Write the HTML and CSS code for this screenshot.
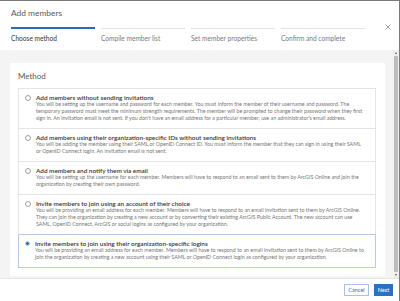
FILE: index.html
```html
<!DOCTYPE html>
<html lang="en">
<head>
  <meta charset="UTF-8" />
  <meta name="viewport" content="width=device-width, initial-scale=1" />
  <title>Add members</title>
  <link rel="stylesheet" href="styles.css">
</head>
<body>
  <div class="dialog">
    <div class="header">
      <div class="dialog-title">Add members</div>
      <div class="steps-row">
        <div class="steps">
          <div class="step active">Choose method</div>
          <div class="step">Compile member list</div>
          <div class="step">Set member properties</div>
          <div class="step">Confirm and complete</div>
        </div>
        <span class="close-x" title="Close" aria-label="Close">
          <svg width="6" height="6" viewBox="0 0 6 6"><path d="M0.5 0.5 L5.5 5.5 M5.5 0.5 L0.5 5.5" stroke="#8a8a8a" stroke-width="0.8" fill="none"/></svg>
        </span>
      </div>
    </div>
    <div class="content">
      <div class="scroll-area">
        <div class="card">
          <div class="card-title">Method</div>
          <div class="options">
            <label class="option">
              <span class="radio"></span>
              <span class="option-body">
                <span class="option-title">Add members without sending invitations</span>
                <span class="option-desc">You will be setting up the username and password for each member. You must inform the member of their username and password. The temporary password must meet the minimum strength requirements. The member will be prompted to change their password when they first sign in. An invitation email is not sent. If you don't have an email address for a particular member, use an administrator's email address.</span>
              </span>
            </label>
            <label class="option">
              <span class="radio"></span>
              <span class="option-body">
                <span class="option-title">Add members using their organization-specific IDs without sending invitations</span>
                <span class="option-desc">You will be adding the member using their SAML or OpenID Connect ID. You must inform the member that they can sign in using their SAML or OpenID Connect login. An invitation email is not sent.</span>
              </span>
            </label>
            <label class="option">
              <span class="radio"></span>
              <span class="option-body">
                <span class="option-title">Add members and notify them via email</span>
                <span class="option-desc">You will be setting up the username for each member. Members will have to respond to an email sent to them by ArcGIS Online and join the organization by creating their own password.</span>
              </span>
            </label>
            <label class="option">
              <span class="radio"></span>
              <span class="option-body">
                <span class="option-title">Invite members to join using an account of their choice</span>
                <span class="option-desc">You will be providing an email address for each member. Members will have to respond to an email invitation sent to them by ArcGIS Online. They can join the organization by creating a new account or by converting their existing ArcGIS Public Account. The new account can use SAML, OpenID Connect, ArcGIS or social logins as configured by your organization.</span>
              </span>
            </label>
            <label class="option selected">
              <span class="radio"></span>
              <span class="option-body">
                <span class="option-title">Invite members to join using their organization-specific logins</span>
                <span class="option-desc">You will be providing an email address for each member. Members will have to respond to an email invitation sent to them by ArcGIS Online to join the organization by creating a new account using their SAML or OpenID Connect login as configured by your organization.</span>
              </span>
            </label>
          </div>
        </div>
      </div>
      <div class="scrollbar">
        <span class="arrow up"></span>
        <span class="thumb"></span>
        <span class="arrow down"></span>
      </div>
    </div>
    <div class="footer">
      <button class="btn btn-cancel">Cancel</button>
      <button class="btn btn-next">Next</button>
    </div>
  </div>
</body>
</html>
```

FILE: styles.css
```css
body {
  margin: 0;
  padding: 0;
  background: #fff;
  font-family: Lato, 'Open Sans', sans-serif;
  color: #4a4a4a;
}
.dialog {
  width: 400px;
  height: 301px;
  box-sizing: border-box;
  border-top: 1px solid #7a7a7a;
  border-right: 1px solid #7a7a7a;
  display: flex;
  flex-direction: column;
  overflow: hidden;
}
.header {
  height: 49px;
  box-sizing: border-box;
  padding: 7px 0 0 11px;
  flex-shrink: 0;
}
.dialog-title {
  font-size: 8.4px;
  line-height: 10px;
  color: #5a5a5a;
}
.steps-row {
  display: flex;
  align-items: flex-start;
  margin-top: 9px;
}
.steps {
  display: flex;
  gap: 6px;
}
.step {
  width: 84px;
  border-top: 1px solid #e2e2e2;
  margin-top: 1px;
  padding-top: 5px;
  font-size: 6.6px;
  line-height: 8px;
  color: #7a7a7a;
}
.step.active {
  border-top: 2px solid #2e6bb7;
  margin-top: 0;
  color: #363636;
}
.close-x {
  margin-left: auto;
  margin-right: 8px;
  margin-top: -3px;
  display: flex;
}
.content {
  flex: 1;
  display: flex;
  background: #f4f4f4;
  min-height: 0;
}
.scroll-area {
  flex: 1;
  overflow: hidden;
  padding: 13px 8px 0 10px;
}
.card {
  background: #fff;
  padding: 8px 9px 8px 8px;
}
.card-title {
  font-size: 8px;
  line-height: 10px;
  color: #5a5a5a;
  margin-bottom: 7px;
}
.options {
  display: flex;
  flex-direction: column;
}
.option {
  display: flex;
  gap: 5px;
  padding: 5px 9px 6px 6px;
  border: 1px solid #e4e4e4;
  margin-top: -1px;
  position: relative;
}
.option:first-child {
  margin-top: 0;
}
.option.selected {
  border-color: #b4cbea;
  z-index: 1;
}
.radio {
  width: 4px;
  height: 4px;
  border: 1px solid #a0a0a0;
  border-radius: 50%;
  margin-top: 0.5px;
  flex-shrink: 0;
  box-sizing: content-box;
}
.option.selected .radio {
  border-color: #c6d7ee;
  background: #2e6bb7;
  width: 3px;
  height: 3px;
  border-width: 1.5px;
}
.option-body {
  display: flex;
  flex-direction: column;
}
.option-title {
  font-size: 6.4px;
  line-height: 7px;
  color: #353535;
  font-weight: 600;
}
.option-desc {
  font-size: 5.3px;
  line-height: 7px;
  color: #767676;
}
.scrollbar {
  width: 6px;
  display: flex;
  flex-direction: column;
  align-items: center;
  background: #f0f0f0;
  padding: 2px 0;
  gap: 2px;
}
.thumb {
  flex: 1;
  width: 4px;
  background: #bdbdbd;
  border-radius: 1px;
}
.arrow {
  width: 0;
  height: 0;
  border-left: 1.5px solid transparent;
  border-right: 1.5px solid transparent;
}
.arrow.up {
  border-bottom: 2px solid #555;
}
.arrow.down {
  border-top: 2px solid #555;
}
.footer {
  height: 23px;
  box-sizing: border-box;
  border-top: 1px solid #e6e6e6;
  display: flex;
  justify-content: flex-end;
  align-items: center;
  gap: 5px;
  padding-right: 6px;
  flex-shrink: 0;
}
.btn {
  height: 12px;
  padding: 0;
  font-family: Lato, 'Open Sans', sans-serif;
  font-size: 5.5px;
  border-radius: 0;
  cursor: pointer;
}
.btn-cancel {
  width: 25px;
  background: #fff;
  border: 1px solid #a9c2e3;
  color: #3a6db3;
}
.btn-next {
  width: 19px;
  background: #2f6fbf;
  border: 1px solid #2f6fbf;
  color: #fff;
}
```
